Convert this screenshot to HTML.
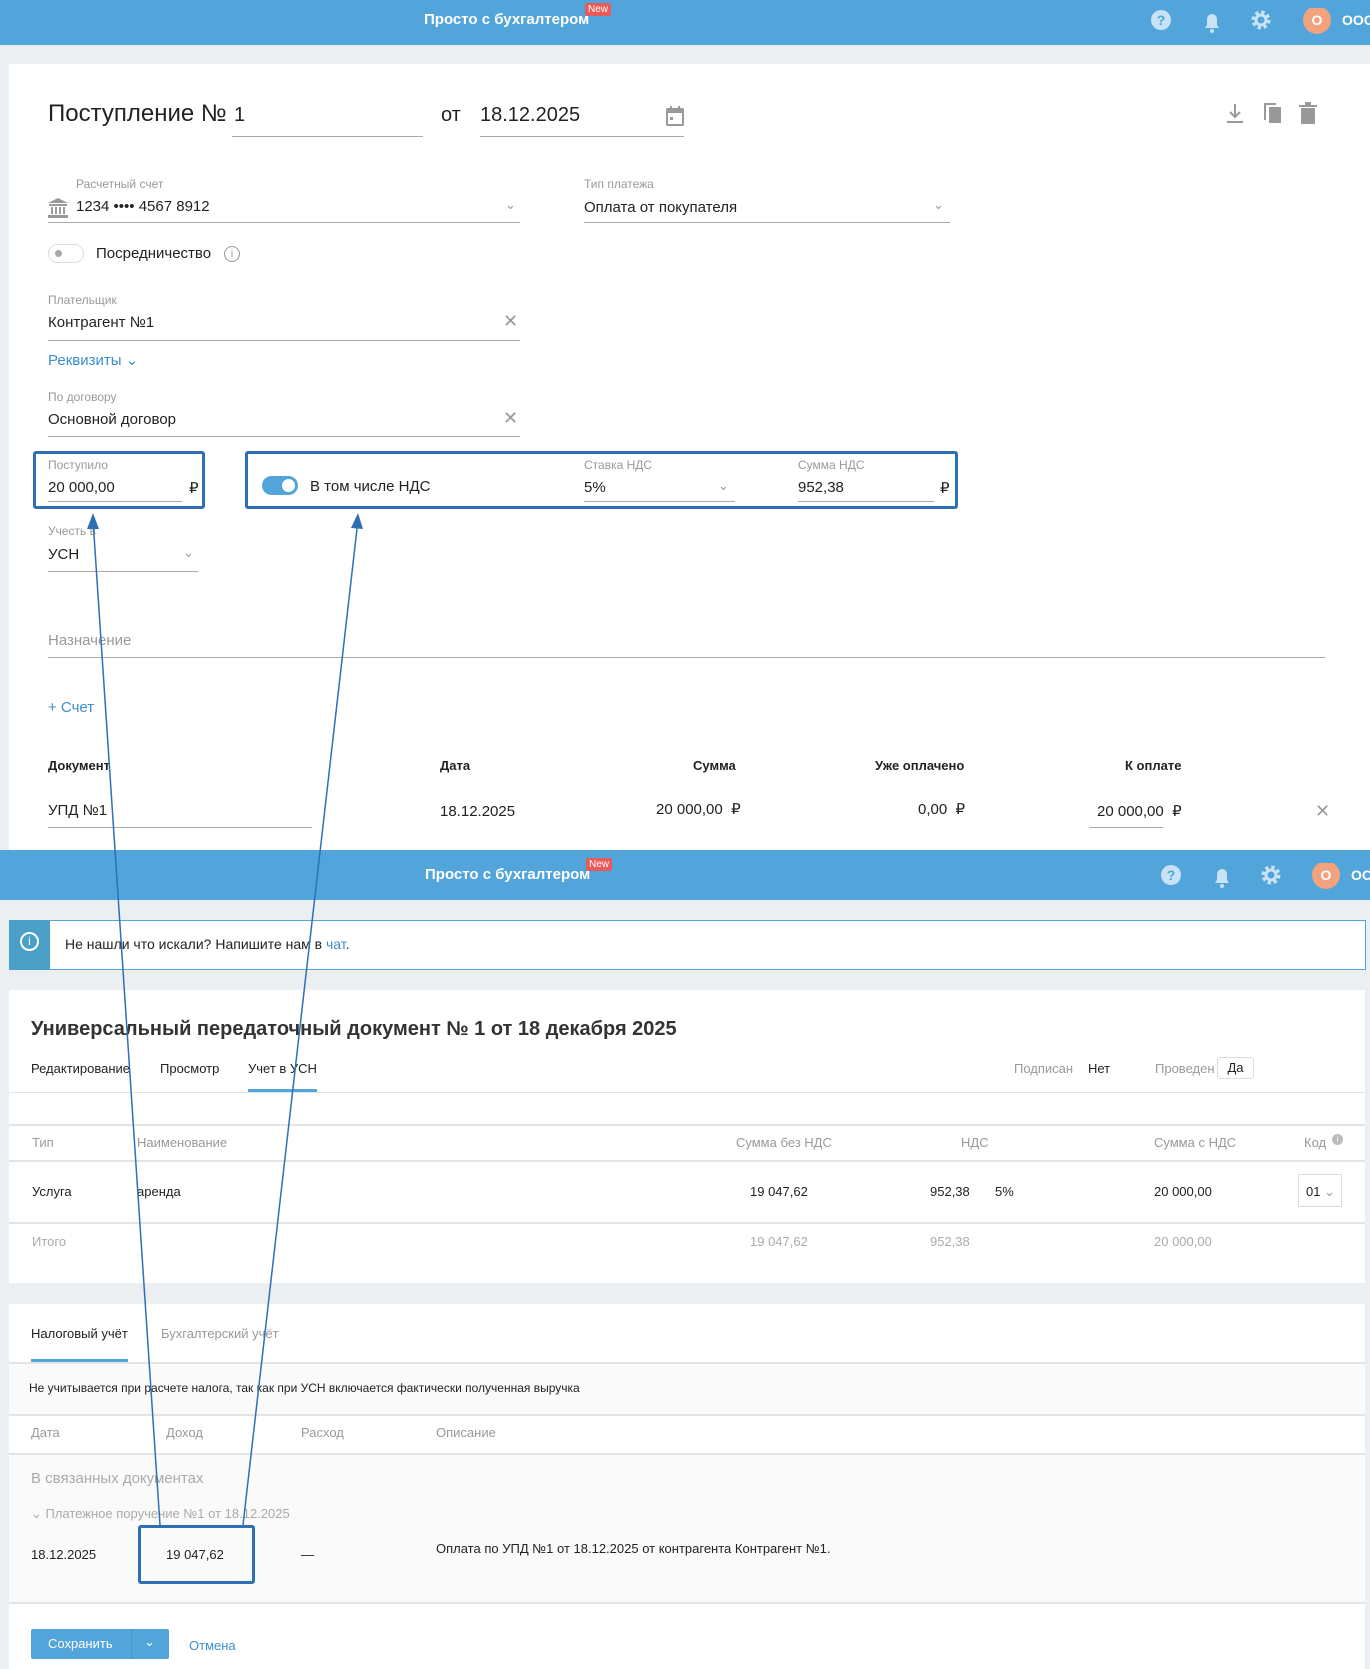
<!DOCTYPE html>
<html><head><meta charset="utf-8"><style>
*{margin:0;padding:0;box-sizing:border-box}
body{width:1370px;height:1669px;position:relative;background:#eceff1;font-family:"Liberation Sans",sans-serif;color:#222;overflow:hidden}
.a{position:absolute;white-space:nowrap}
.bar{position:absolute;left:0;width:1370px;background:#52a5db}
.lbl{font-size:12px;color:#999}
.val{font-size:15px;color:#222}
.ul{position:absolute;height:1px;background:#aaa}
.s{font-size:13px}
.g{color:#999}
.hl{position:absolute;left:9px;width:1356px;height:2px;background:#e4e4e4}
.blue{color:#3a8fd0}
</style></head><body>
<div class="bar" style="top:0;height:45px"></div>
<div class="a" style="left:424px;top:11px;color:#fff;font-size:15px;font-weight:bold">Просто с бухгалтером</div>
<div class="a" style="left:585px;top:3px;background:#e95a5a;color:#fff;font-size:10px;padding:1px 3px;border-radius:2px">New</div>
<svg class="a" style="left:1150px;top:8px" width="220" height="30">
<circle cx="11" cy="12" r="10" fill="#c9e2f5"/><text x="11" y="17" font-size="14" text-anchor="middle" fill="#52a5db" font-family="Liberation Sans" font-weight="bold">?</text>
<path d="M55 20h14l-2-3v-6a5 5 0 0 0-10 0v6z" fill="#c9e2f5"/><circle cx="62" cy="23" r="2" fill="#c9e2f5"/>
<circle cx="111" cy="12" r="7" fill="none" stroke="#c9e2f5" stroke-width="5" stroke-dasharray="3 2.5"/><circle cx="111" cy="12" r="5" fill="none" stroke="#c9e2f5" stroke-width="3"/>
<circle cx="167" cy="12" r="14" fill="#f2a27c"/><text x="167" y="17" font-size="14" text-anchor="middle" fill="#fff" font-family="Liberation Sans" font-weight="bold">О</text>
<text x="192" y="17" font-size="14" fill="#fff" font-family="Liberation Sans" font-weight="bold">ООО</text>
</svg>
<div class="a" style="left:9px;top:64px;width:1361px;height:786px;background:#fff"></div>
<div class="a" style="left:48px;top:100px;font-size:24px">Поступление №</div>
<div class="a" style="left:234px;top:104px;font-size:20px">1</div>
<div class="ul" style="left:232px;top:136px;width:191px"></div>
<div class="a" style="left:441px;top:104px;font-size:20px">от</div>
<div class="a" style="left:480px;top:104px;font-size:20px">18.12.2025</div>
<div class="ul" style="left:480px;top:136px;width:204px"></div>
<svg class="a" style="left:665px;top:105px" width="20" height="22"><rect x="2" y="4" width="16" height="16" rx="1" fill="none" stroke="#999" stroke-width="2"/><rect x="2" y="4" width="16" height="4" fill="#999"/><rect x="5" y="1" width="2" height="4" fill="#999"/><rect x="13" y="1" width="2" height="4" fill="#999"/><rect x="5" y="12" width="3" height="3" fill="#999"/></svg>
<svg class="a" style="left:1225px;top:102px" width="100" height="24">
<path d="M10 2v13M5 10l5 5 5-5M2 20h16" stroke="#999" stroke-width="2" fill="none"/>
<rect x="44" y="5" width="12" height="16" fill="#999"/><path d="M40 18V2h11" stroke="#999" stroke-width="2" fill="none"/>
<rect x="76" y="6" width="14" height="16" fill="#999"/><rect x="74" y="3" width="18" height="2" fill="#999"/><rect x="80" y="0" width="6" height="3" fill="#999"/>
</svg>
<div class="a lbl" style="left:76px;top:177px">Расчетный счет</div>
<svg class="a" style="left:48px;top:198px" width="20" height="20"><path d="M0 5L10 0 20 5z" fill="#999"/><rect x="1" y="6" width="18" height="2" fill="#999"/><rect x="3" y="9" width="2" height="7" fill="#999"/><rect x="7" y="9" width="2" height="7" fill="#999"/><rect x="11" y="9" width="2" height="7" fill="#999"/><rect x="15" y="9" width="2" height="7" fill="#999"/><rect x="0" y="17" width="20" height="3" fill="#999"/></svg>
<div class="a val" style="left:76px;top:198px">1234 •••• 4567 8912</div>
<div class="a g" style="left:505px;top:197px;font-size:13px">&#8964;</div>
<div class="ul" style="left:48px;top:222px;width:472px"></div>
<div class="a lbl" style="left:584px;top:177px">Тип платежа</div>
<div class="a val" style="left:584px;top:199px">Оплата от покупателя</div>
<div class="a g" style="left:933px;top:197px;font-size:13px">&#8964;</div>
<div class="ul" style="left:584px;top:222px;width:366px"></div>
<div class="a" style="left:48px;top:244px;width:36px;height:19px;border:1px solid #ddd;border-radius:10px"></div>
<div class="a" style="left:55px;top:250px;width:7px;height:7px;border-radius:50%;background:#aaa"></div>
<div class="a val" style="left:96px;top:245px">Посредничество</div>
<div class="a" style="left:224px;top:246px;width:16px;height:16px;border:1px solid #999;border-radius:50%;font-size:11px;text-align:center;color:#999;line-height:14px">i</div>
<div class="a lbl" style="left:48px;top:293px">Плательщик</div>
<div class="a val" style="left:48px;top:314px">Контрагент №1</div>
<div class="a g" style="left:503px;top:311px;font-size:18px">✕</div>
<div class="ul" style="left:48px;top:340px;width:472px"></div>
<div class="a blue" style="left:48px;top:351px;font-size:15px">Реквизиты &#8964;</div>
<div class="a lbl" style="left:48px;top:390px">По договору</div>
<div class="a val" style="left:48px;top:411px">Основной договор</div>
<div class="a g" style="left:503px;top:408px;font-size:18px">✕</div>
<div class="ul" style="left:48px;top:436px;width:472px"></div>
<div class="a" style="left:33px;top:451px;width:172px;height:58px;border:3px solid #2f6fb6;border-radius:3px"></div>
<div class="a lbl" style="left:48px;top:458px">Поступило</div>
<div class="a val" style="left:48px;top:479px">20 000,00</div>
<div class="a val" style="left:189px;top:479px">₽</div>
<div class="ul" style="left:48px;top:501px;width:134px"></div>
<div class="a" style="left:245px;top:451px;width:713px;height:58px;border:3px solid #2f6fb6;border-radius:3px"></div>
<div class="a" style="left:262px;top:476px;width:36px;height:19px;border-radius:10px;background:#52a5db"></div>
<div class="a" style="left:282px;top:479px;width:13px;height:13px;border-radius:50%;background:#fff"></div>
<div class="a val" style="left:310px;top:478px">В том числе НДС</div>
<div class="a lbl" style="left:584px;top:458px">Ставка НДС</div>
<div class="a val" style="left:584px;top:479px">5%</div>
<div class="a g" style="left:718px;top:478px;font-size:13px">&#8964;</div>
<div class="ul" style="left:584px;top:501px;width:151px"></div>
<div class="a lbl" style="left:798px;top:458px">Сумма НДС</div>
<div class="a val" style="left:798px;top:479px">952,38</div>
<div class="a val" style="left:940px;top:479px">₽</div>
<div class="ul" style="left:798px;top:501px;width:136px"></div>
<div class="a lbl" style="left:48px;top:524px">Учесть в</div>
<div class="a val" style="left:48px;top:546px">УСН</div>
<div class="a g" style="left:183px;top:545px;font-size:13px">&#8964;</div>
<div class="ul" style="left:48px;top:571px;width:150px"></div>
<div class="a" style="left:48px;top:632px;font-size:15px;color:#999">Назначение</div>
<div class="ul" style="left:48px;top:657px;width:1277px"></div>
<div class="a blue" style="left:48px;top:699px;font-size:15px">+ Счет</div>
<div class="a" style="left:48px;top:758px;font-size:13px;font-weight:bold">Документ</div>
<div class="a" style="left:440px;top:758px;font-size:13px;font-weight:bold">Дата</div>
<div class="a" style="left:693px;top:758px;font-size:13px;font-weight:bold">Сумма</div>
<div class="a" style="left:875px;top:758px;font-size:13px;font-weight:bold">Уже оплачено</div>
<div class="a" style="left:1125px;top:758px;font-size:13px;font-weight:bold">К оплате</div>
<div class="a val" style="left:48px;top:802px">УПД №1</div>
<div class="ul" style="left:48px;top:827px;width:264px"></div>
<div class="a val" style="left:440px;top:803px">18.12.2025</div>
<div class="a val" style="left:656px;top:800px">20 000,00 &nbsp;₽</div>
<div class="a val" style="left:918px;top:800px">0,00 &nbsp;₽</div>
<div class="a val" style="left:1097px;top:802px">20 000,00 &nbsp;₽</div>
<div class="ul" style="left:1089px;top:827px;width:74px"></div>
<div class="a g" style="left:1315px;top:801px;font-size:18px">✕</div>
<div class="bar" style="top:850px;height:50px"></div>
<div class="a" style="left:425px;top:866px;color:#fff;font-size:15px;font-weight:bold">Просто с бухгалтером</div>
<div class="a" style="left:586px;top:858px;background:#e95a5a;color:#fff;font-size:10px;padding:1px 3px;border-radius:2px">New</div>
<svg class="a" style="left:1160px;top:863px" width="210" height="30">
<circle cx="11" cy="12" r="10" fill="#c9e2f5"/><text x="11" y="17" font-size="14" text-anchor="middle" fill="#52a5db" font-family="Liberation Sans" font-weight="bold">?</text>
<path d="M55 20h14l-2-3v-6a5 5 0 0 0-10 0v6z" fill="#c9e2f5"/><circle cx="62" cy="23" r="2" fill="#c9e2f5"/>
<circle cx="111" cy="12" r="7" fill="none" stroke="#c9e2f5" stroke-width="5" stroke-dasharray="3 2.5"/><circle cx="111" cy="12" r="5" fill="none" stroke="#c9e2f5" stroke-width="3"/>
<circle cx="166" cy="12" r="14" fill="#f2a27c"/><text x="166" y="17" font-size="14" text-anchor="middle" fill="#fff" font-family="Liberation Sans" font-weight="bold">О</text>
<text x="191" y="17" font-size="14" fill="#fff" font-family="Liberation Sans" font-weight="bold">ОО</text>
</svg>
<div class="a" style="left:9px;top:920px;width:1357px;height:50px;background:#fff;border:1px solid #52a5db"></div>
<div class="a" style="left:9px;top:920px;width:41px;height:50px;background:#4aa0c6"></div>
<div class="a" style="left:20px;top:932px;width:19px;height:19px;border:2px solid #fff;border-radius:50%;color:#fff;font-size:12px;text-align:center;line-height:15px">i</div>
<div class="a" style="left:65px;top:936px;font-size:14px">Не нашли что искали? Напишите нам в <span class="blue">чат</span>.</div>
<div class="a" style="left:9px;top:990px;width:1356px;height:293px;background:#fff"></div>
<div class="a" style="left:31px;top:1018px;font-size:20px;font-weight:bold;color:#333">Универсальный передаточный документ № 1 от 18 декабря 2025</div>
<div class="a s" style="left:31px;top:1061px">Редактирование</div>
<div class="a s" style="left:160px;top:1061px">Просмотр</div>
<div class="a s" style="left:248px;top:1061px">Учет в УСН</div>
<div class="a" style="left:248px;top:1089px;width:69px;height:3px;background:#52a5db"></div>
<div class="a s g" style="left:1014px;top:1061px">Подписан</div>
<div class="a s" style="left:1088px;top:1061px">Нет</div>
<div class="a s g" style="left:1155px;top:1061px">Проведен</div>
<div class="a s" style="left:1217px;top:1057px;width:37px;height:22px;border:1px solid #ddd;border-radius:3px;text-align:center;line-height:20px">Да</div>
<div class="hl" style="top:1092px;height:1px"></div>
<div class="hl" style="top:1124px"></div>
<div class="a s g" style="left:32px;top:1135px">Тип</div>
<div class="a s g" style="left:137px;top:1135px">Наименование</div>
<div class="a s g" style="left:736px;top:1135px">Сумма без НДС</div>
<div class="a s g" style="left:961px;top:1135px">НДС</div>
<div class="a s g" style="left:1154px;top:1135px">Сумма с НДС</div>
<div class="a s g" style="left:1304px;top:1135px">Код</div>
<div class="a" style="left:1332px;top:1134px;width:11px;height:11px;border-radius:50%;background:#bbb;color:#fff;font-size:8px;text-align:center;line-height:11px">i</div>
<div class="hl" style="top:1160px"></div>
<div class="a s" style="left:32px;top:1184px">Услуга</div>
<div class="a s" style="left:137px;top:1184px">аренда</div>
<div class="a s" style="left:750px;top:1184px">19 047,62</div>
<div class="a s" style="left:930px;top:1184px">952,38</div>
<div class="a s" style="left:995px;top:1184px">5%</div>
<div class="a s" style="left:1154px;top:1184px">20 000,00</div>
<div class="a s" style="left:1298px;top:1174px;width:44px;height:33px;border:1px solid #ddd;padding:9px 0 0 7px">01 <span class="g">&#8964;</span></div>
<div class="hl" style="top:1222px"></div>
<div class="a s g" style="left:32px;top:1234px;color:#aaa">Итого</div>
<div class="a s" style="left:750px;top:1234px;color:#aaa">19 047,62</div>
<div class="a s" style="left:930px;top:1234px;color:#aaa">952,38</div>
<div class="a s" style="left:1154px;top:1234px;color:#aaa">20 000,00</div>
<div class="a" style="left:9px;top:1304px;width:1356px;height:365px;background:#fff"></div>
<div class="a s" style="left:31px;top:1326px">Налоговый учёт</div>
<div class="a s g" style="left:161px;top:1326px">Бухгалтерский учёт</div>
<div class="a" style="left:31px;top:1359px;width:97px;height:3px;background:#52a5db"></div>
<div class="a" style="left:9px;top:1362px;width:1356px;height:240px;background:#fafafa"></div>
<div class="hl" style="top:1362px"></div>
<div class="a" style="left:29px;top:1381px;font-size:12px">Не учитывается при расчете налога, так как при УСН включается фактически полученная выручка</div>
<div class="hl" style="top:1414px"></div>
<div class="a" style="left:9px;top:1416px;width:1356px;height:37px;background:#fff"></div>
<div class="a s g" style="left:31px;top:1425px">Дата</div>
<div class="a s g" style="left:166px;top:1425px">Доход</div>
<div class="a s g" style="left:301px;top:1425px">Расход</div>
<div class="a s g" style="left:436px;top:1425px">Описание</div>
<div class="hl" style="top:1453px"></div>
<div class="a g" style="left:31px;top:1470px;font-size:15px;color:#aaa">В связанных документах</div>
<div class="a s" style="left:31px;top:1506px;color:#aaa">&#8964; Платежное поручение №1 от 18.12.2025</div>
<div class="a s" style="left:31px;top:1547px">18.12.2025</div>
<div class="a" style="left:138px;top:1525px;width:117px;height:59px;border:3px solid #2f6fb6;border-radius:3px;background:#fafafa"></div>
<div class="a s" style="left:166px;top:1547px">19 047,62</div>
<div class="a s" style="left:301px;top:1547px">—</div>
<div class="a s" style="left:436px;top:1541px">Оплата по УПД №1 от 18.12.2025 от контрагента Контрагент №1.</div>
<div class="hl" style="top:1602px"></div>
<div class="a" style="left:31px;top:1629px;width:138px;height:30px;background:#52a5db;border-radius:2px"></div>
<div class="a" style="left:131px;top:1629px;width:1px;height:30px;background:#4a94c5"></div>
<div class="a s" style="left:48px;top:1636px;color:#fff">Сохранить</div>
<div class="a s" style="left:144px;top:1634px;color:#fff">&#8964;</div>
<div class="a s blue" style="left:189px;top:1638px">Отмена</div>
<svg class="a" style="left:0;top:0" width="1370" height="1669">
<line x1="160" y1="1525" x2="93" y2="520" stroke="#2f6fb6" stroke-width="1.5"/>
<path d="M93 513l-6 16h12z" fill="#2f6fb6"/>
<line x1="243" y1="1525" x2="358" y2="520" stroke="#2f6fb6" stroke-width="1.5"/>
<path d="M358 513l-7 15 12 1z" fill="#2f6fb6"/>
</svg>
</body></html>
